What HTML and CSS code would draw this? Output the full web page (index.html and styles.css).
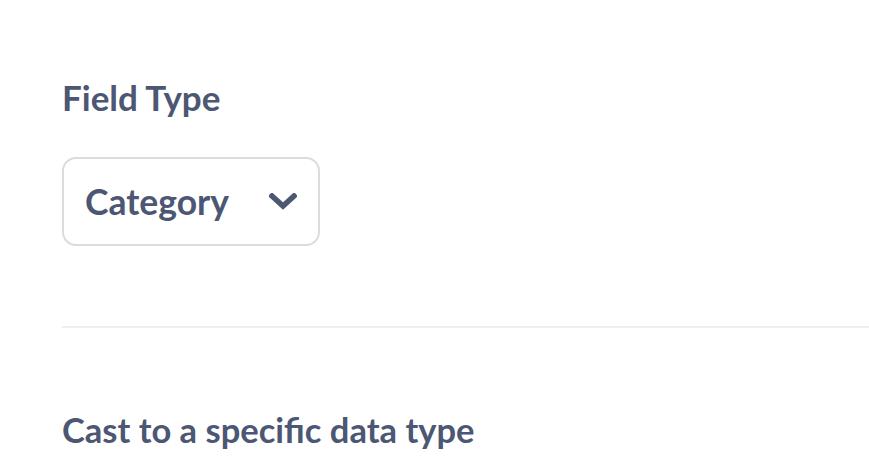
FILE: index.html
```html
<!DOCTYPE html>
<html>
<head>
<meta charset="utf-8">
<link rel="stylesheet" href="styles.css">
</head>
<body>
<div class="page">
  <section class="section">
    <h2 class="label">Field Type</h2>
    <div class="select">
      <span class="select-value">Category</span>
      <svg class="chevron" width="28" height="17" viewBox="0 0 28 17"><path d="M3 3 L14 13 L25 3" fill="none" stroke="#4c5773" stroke-width="5.5" stroke-linecap="square"/></svg>
    </div>
  </section>
  <hr class="divider">
  <section class="section cast">
    <h2 class="label label-small">Cast to a specific data type</h2>
  </section>
</div>
</body>
</html>
```
FILE: styles.css
```css
html, body { margin: 0; padding: 0; background: #fff; }
body { font-family: Lato, "Open Sans", sans-serif; color: #4c5773; overflow: hidden; }
.page { padding: 76px 0 0 62px; }
.label { margin: 0; font-size: 35px; font-weight: 700; line-height: 42px; }
.label-small { font-size: 34.5px; }
.select {
  margin-top: 39px;
  width: 254px; height: 85px;
  box-sizing: content-box;
  border: 2px solid #dcdcdc; border-radius: 14px;
  display: flex; align-items: center; justify-content: space-between;
  padding: 0;
}
.select-value { font-size: 35.5px; font-weight: 700; padding-left: 21px; }
.chevron { margin-right: 21px; display: block; }
.divider { margin: 80px 0 0 0; border: 0; height: 2px; background: #eeeeee; }
.cast { margin-top: 81px; }
```
